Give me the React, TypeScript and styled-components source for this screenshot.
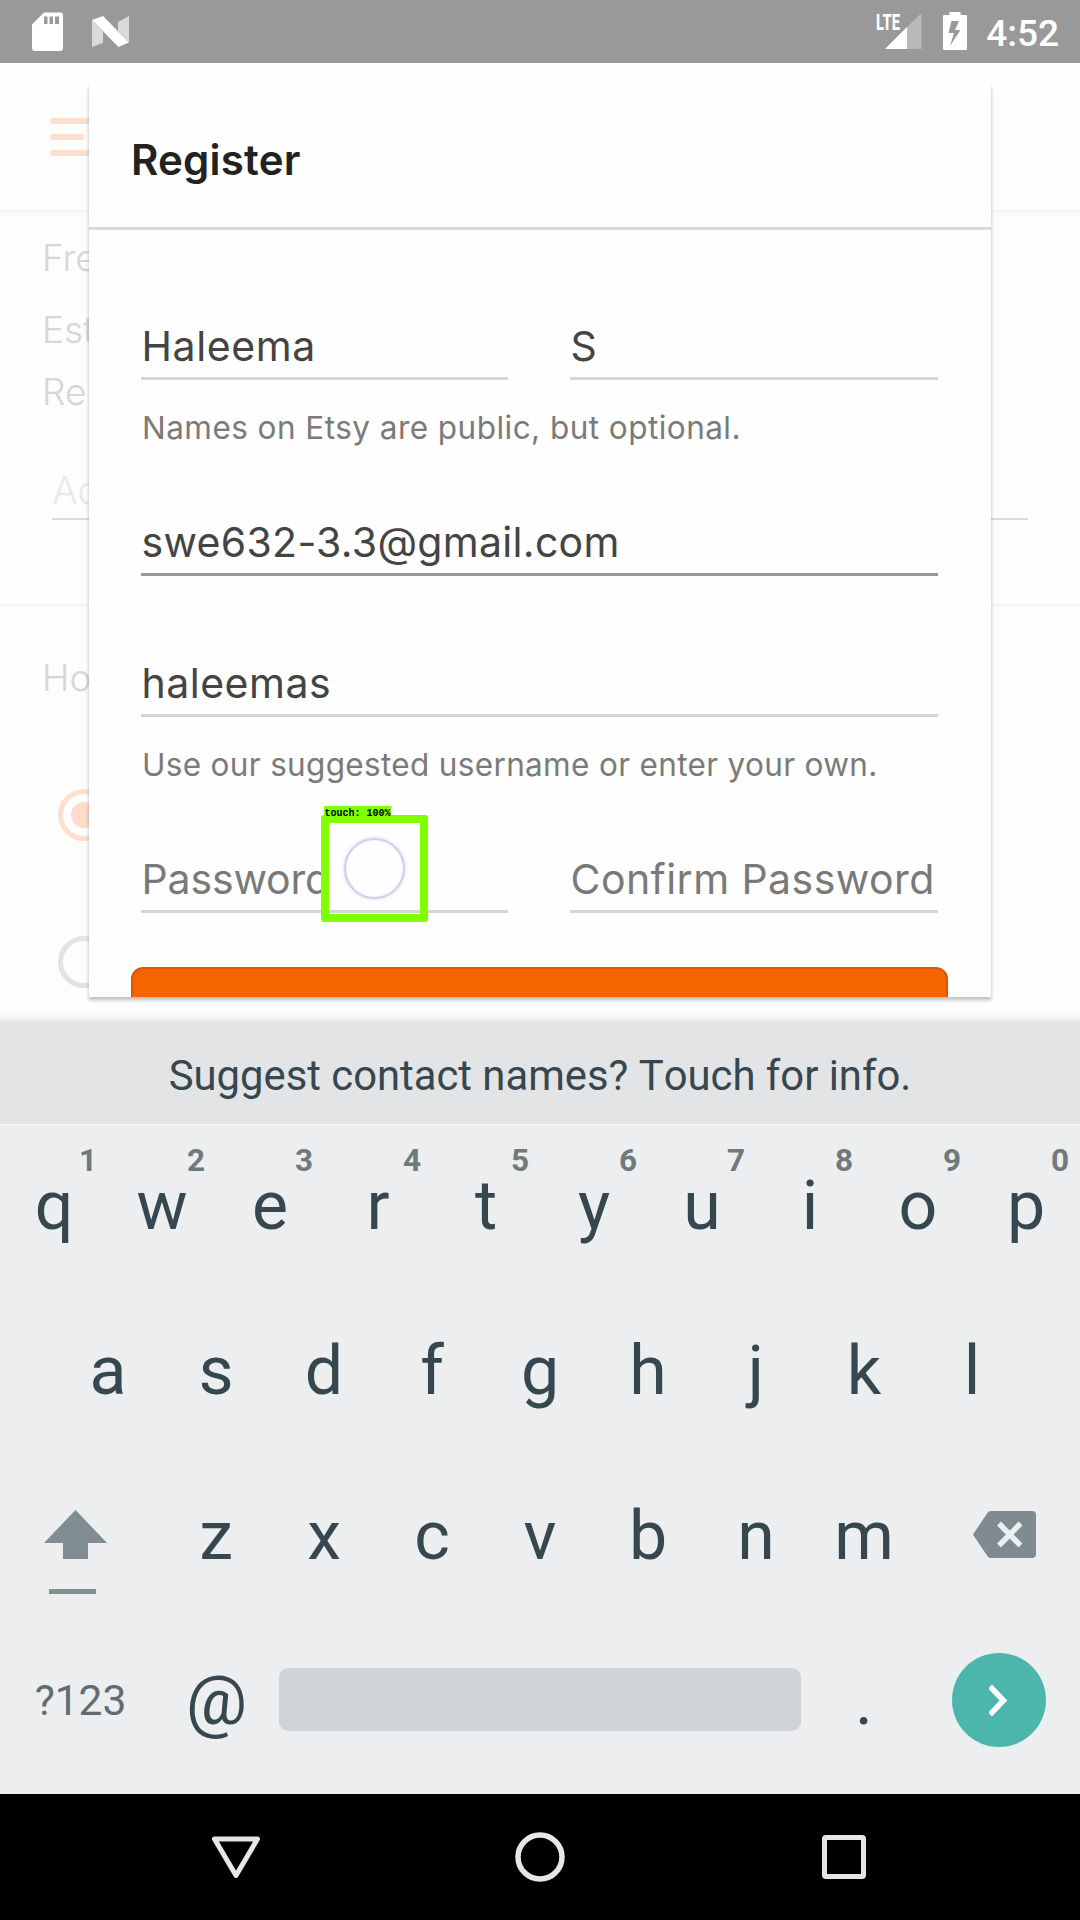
import React from 'react';
import styled, { createGlobalStyle } from 'styled-components';

const GlobalStyle = createGlobalStyle`
  html, body { margin: 0; padding: 0; background: #fdfdfd; }
  *, *::before, *::after { box-sizing: border-box; }
`;

const ui = `Inter, 'Liberation Sans', sans-serif`;
const system = `Roboto, 'Liberation Sans', sans-serif`;

const Screen = styled.div`
  display: flex;
  flex-direction: column;
  width: 1080px;
  height: 1920px;
  overflow: hidden;
  background: #fdfdfd;
  font-family: ${ui};
`;

/* ---------- status bar ---------- */

const StatusBar = styled.header`
  display: flex;
  flex: none;
  justify-content: space-between;
  height: 63px;
  padding: 0 21px 0 32px;
  background: #999;
  color: #fff;
`;

const StatusGroup = styled.div<{ $gap: number }>`
  display: flex;
  align-items: flex-start;
  gap: ${(p) => p.$gap}px;
  padding-top: 12px;
`;

const Signal = styled.svg`
  margin: -6px -1px 0 0;
`;

const Clock = styled.span`
  margin-left: -3px;
  font: 500 37px/43px ${system};
`;

/* ---------- page behind the dialog ---------- */

const Stage = styled.main`
  position: relative;
  flex: none;
  height: 958px;
`;

const AppBar = styled.div`
  display: flex;
  flex-direction: column;
  gap: 10px;
  height: 147px;
  padding: 55px 0 0 50px;
  box-shadow: 0 2px 5px rgba(0, 0, 0, 0.06);
`;

const MenuLine = styled.div<{ $width: number }>`
  width: ${(p) => p.$width}px;
  height: 6px;
  border-radius: 3px;
  background: #fddfce;
`;

const PageBody = styled.div`
  display: flex;
  flex-direction: column;
`;

const PageText = styled.div<{ $top: number }>`
  margin: ${(p) => p.$top}px 0 0 42px;
  color: #d6d6d6;
  font: 350 37px/44px ${ui};
`;

const PageInput = styled.div`
  width: 976px;
  margin: 54px 0 0 52px;
  padding: 0 0 6px 0;
  border-bottom: 2px solid #dedede;
  color: #e9e9e9;
  font: 350 38px/44px ${ui};
`;

const PageDivider = styled.div`
  height: 3px;
  margin-top: 84px;
  background: #f6f6f6;
`;

const Radio = styled.div<{ $top: number; $color: string }>`
  display: flex;
  align-items: center;
  justify-content: center;
  width: 52px;
  height: 52px;
  margin: ${(p) => p.$top}px 0 0 58px;
  border: 5px solid ${(p) => p.$color};
  border-radius: 50%;
`;

const RadioDot = styled.div`
  width: 26px;
  height: 26px;
  border-radius: 50%;
  background: #fddccb;
`;

const KeyboardShade = styled.div`
  position: absolute;
  right: 0;
  bottom: 0;
  left: 0;
  height: 8px;
  background: linear-gradient(rgba(236, 238, 239, 0), #ececed);
`;

/* ---------- dialog ---------- */

const Dialog = styled.section`
  position: absolute;
  top: 21px;
  left: 89px;
  display: flex;
  flex-direction: column;
  width: 902px;
  height: 913px;
  background: #fefefe;
  box-shadow: 0 3px 4px rgba(0, 0, 0, 0.26);
  clip-path: inset(0 -6px -8px -6px);
`;

const DialogHeader = styled.div`
  flex: none;
  height: 146px;
  padding: 51px 0 0 42px;
  border-bottom: 3px solid #dadada;
`;

const DialogTitle = styled.h1`
  margin: 0;
  color: #222;
  font: 570 42px/50px ${ui};
  letter-spacing: 0.2px;
`;

const Form = styled.div`
  flex: 1;
  min-height: 0;
  padding: 91px 53px 0 52px;
  overflow: hidden;
`;

const FieldRow = styled.div<{ $top?: number }>`
  display: grid;
  grid-template-columns: 367px 368px;
  justify-content: space-between;
  margin-top: ${(p) => p.$top ?? 0}px;
`;

const Field = styled.div<{ $top?: number; $active?: boolean; $empty?: boolean; $track?: number }>`
  height: 59px;
  margin-top: ${(p) => p.$top ?? 0}px;
  padding-left: 0.5px;
  border-bottom: 3px solid ${(p) => (p.$active ? '#999' : '#d5d5d5')};
  color: ${(p) => (p.$empty ? '#797979' : '#444')};
  font: 400 41px/50px ${ui};
  letter-spacing: ${(p) => p.$track ?? 0.5}px;
  white-space: nowrap;
`;

const Hint = styled.p<{ $track: number }>`
  margin: 28px 0 0;
  padding-left: 1px;
  color: #7a7a7a;
  font: 400 31.5px/40px ${ui};
  letter-spacing: ${(p) => p.$track}px;
  white-space: nowrap;
`;

const Submit = styled.div`
  height: 110px;
  margin: 54px -10px 0;
  border: 2px solid #d95700;
  border-radius: 12px;
  background: #f56400;
`;

/* ---------- touch marker ---------- */

const TouchMarker = styled.div`
  position: absolute;
  top: 752px;
  left: 321px;
  width: 107px;
  height: 107px;
  border: 8px solid #80ff00;
  border-radius: 3px;
`;

const TouchRing = styled.div`
  width: 61px;
  height: 61px;
  margin: 15px 0 0 15px;
  border: 2.5px solid #cfcfe8;
  border-radius: 50%;
  box-shadow: 0 0 3px 1px rgba(205, 205, 238, 0.5), inset 0 0 2px rgba(205, 205, 238, 0.5);
`;

const TouchLabel = styled.div`
  position: absolute;
  top: -17px;
  left: -5px;
  width: 67px;
  height: 12px;
  padding-left: 0.5px;
  background: #80ff00;
  color: #000;
  font: 700 10px/15px 'Liberation Mono', monospace;
  white-space: nowrap;
`;

/* ---------- keyboard ---------- */

const SuggestionBar = styled.div`
  flex: none;
  height: 103px;
  padding-top: 30px;
  background: #e3e4e5;
  color: #37474f;
  font: 400 41.8px/50px ${system};
  font-kerning: none;
  text-align: center;
`;

const Keyboard = styled.div`
  display: flex;
  flex: none;
  flex-direction: column;
  height: 670px;
  border-top: 2px solid #f3f4f5;
  background: #eceeef;
  color: #37474f;
  font-family: ${system};
`;

const KeyRow = styled.div<{ $inset?: number }>`
  display: flex;
  height: 165px;
  padding: 0 ${(p) => p.$inset ?? 0}px;
`;

const Key = styled.div<{ $width?: number }>`
  position: relative;
  flex: none;
  width: ${(p) => p.$width ?? 108}px;
  padding-top: 40px;
  font-size: 68px;
  line-height: 80px;
  text-align: center;
`;

const KeyHint = styled.span`
  position: absolute;
  top: 16px;
  right: 11px;
  color: #70797c;
  font: 700 31.5px/38px ${system};
`;

const SymbolsKey = styled.div`
  width: 162px;
  padding-top: 55px;
  padding-right: 1px;
  color: #5f6d73;
  font-size: 42.5px;
  line-height: 50px;
  text-align: center;
`;

const SpaceKey = styled.div`
  width: 522px;
  height: 63px;
  margin: 47px 9px 0 8px;
  border-radius: 9px;
  background: #d0d4d7;
`;

const ShiftKey = styled.div`
  display: flex;
  flex-direction: column;
  gap: 30px;
  width: 162px;
  padding: 54px 0 0 44px;
`;

const ShiftBar = styled.div`
  width: 47px;
  height: 5px;
  margin-left: 5px;
  background: #82908f;
`;

const DeleteKey = styled.div`
  width: 162px;
  padding: 55px 0 0 55px;
`;

const EnterKey = styled.div`
  display: flex;
  align-items: center;
  justify-content: center;
  width: 94px;
  height: 94px;
  margin: 32px 0 0 34px;
  border-radius: 50%;
  background: #4db6ac;
`;

/* ---------- navigation bar ---------- */

const NavBar = styled.nav`
  display: flex;
  flex: none;
  align-items: center;
  justify-content: center;
  gap: 254px;
  height: 126px;
  background: #000;
`;

const topKeys = 'qwertyuiop'.split('');
const middleKeys = 'asdfghjkl'.split('');
const bottomKeys = 'zxcvbnm'.split('');

export default function App() {
  return (
    <Screen>
      <GlobalStyle />
      <StatusBar>
        <StatusGroup $gap={29}>
          <svg width="31" height="40" viewBox="0 0 31 40">
            <path
              fill="#fff"
              fillRule="evenodd"
              d="M12 .5H28a3 3 0 0 1 3 3V36a3 3 0 0 1-3 3H3a3 3 0 0 1-3-3V12.500ZM12 4.500v7.500h3.500V4.500ZM17.500 4.500v7.500H21V4.500ZM23 4.500v7.500h4V4.500Z"
            />
          </svg>
          <svg width="38" height="40" viewBox="0 0 38 40">
            <path fill="#dadada" d="M0 8 11 20V31L0 35ZM26 10 37 4V30L26 19Z" />
            <path fill="#fff" d="M0 8 11 4 37 30.500 26.500 35Z" />
          </svg>
        </StatusGroup>
        <StatusGroup $gap={22}>
          <Signal width="50" height="46" viewBox="-4 -6 50 46">
            <path fill="#b8b8b8" d="M31 15 45.500 1V37H31Z" />
            <path fill="#fff" d="M9 37 31 15V37Z" />
            <text
              x="0"
              y="17.500"
              fill="#fff"
              fontFamily="Roboto, sans-serif"
              fontWeight="800"
              fontSize="22"
              textLength="24"
              lengthAdjust="spacingAndGlyphs"
            >
              LTE
            </text>
          </Signal>
          <svg width="24" height="40" viewBox="0 0 24 40">
            <path
              fill="#fff"
              fillRule="evenodd"
              d="M6.500 0h11v3H23a1 1 0 0 1 1 1V37a1 1 0 0 1-1 1H1a1 1 0 0 1-1-1V4A1 1 0 0 1 1 3H6.500ZM8.500 9 5.500 21h5.500L7 34 17.500 18h-5.500L16 9Z"
            />
          </svg>
          <Clock>4:52</Clock>
        </StatusGroup>
      </StatusBar>

      <Stage>
        <AppBar>
          <MenuLine $width={48} />
          <MenuLine $width={34} />
          <MenuLine $width={48} />
        </AppBar>
        <PageBody>
          <PageText $top={26}>Fre</PageText>
          <PageText $top={28}>Est</PageText>
          <PageText $top={18}>Re</PageText>
          <PageInput>Ad</PageInput>
          <PageDivider />
          <PageText $top={49}>Ho</PageText>
          <Radio $top={89} $color="#fddfce">
            <RadioDot />
          </Radio>
          <Radio $top={95} $color="#e3e3e3" />
        </PageBody>
        <KeyboardShade />

        <Dialog>
          <DialogHeader>
            <DialogTitle>Register</DialogTitle>
          </DialogHeader>
          <Form>
            <FieldRow>
              <Field $track={0.6}>Haleema</Field>
              <Field>S</Field>
            </FieldRow>
            <Hint $track={0.46}>Names on Etsy are public, but optional.</Hint>
            <Field $top={69} $track={0.3} $active>
              swe632-3.3@gmail.com
            </Field>
            <Field $top={82}>haleemas</Field>
            <Hint $track={0.33}>Use our suggested username or enter your own.</Hint>
            <FieldRow $top={69}>
              <Field $track={-0.15} $empty>
                Password
              </Field>
              <Field $track={0.45} $empty>
                Confirm Password
              </Field>
            </FieldRow>
            <Submit />
          </Form>
        </Dialog>

        <TouchMarker>
          <TouchRing />
          <TouchLabel>touch: 100%</TouchLabel>
        </TouchMarker>
      </Stage>

      <SuggestionBar>Suggest contact names? Touch for info.</SuggestionBar>
      <Keyboard>
        <KeyRow>
          {topKeys.map((k, i) => (
            <Key key={k}>
              {k}
              <KeyHint>{(i + 1) % 10}</KeyHint>
            </Key>
          ))}
        </KeyRow>
        <KeyRow $inset={54}>
          {middleKeys.map((k) => (
            <Key key={k}>{k}</Key>
          ))}
        </KeyRow>
        <KeyRow>
          <ShiftKey>
            <svg width="63" height="49" viewBox="0 0 63 49">
              <path fill="#7f8c91" d="M31.500 0 63 33H44V49H19V33H0Z" />
            </svg>
            <ShiftBar />
          </ShiftKey>
          {bottomKeys.map((k) => (
            <Key key={k}>{k}</Key>
          ))}
          <DeleteKey>
            <svg width="63" height="47" viewBox="0 0 63 47">
              <path
                fill="#7f8b91"
                d="M17.500 0H59a4 4 0 0 1 4 4V43a4 4 0 0 1-4 4H17.500Q15.500 47 14 44.500L0 23.500 14 2.500Q15.500 0 17.500 0Z"
              />
              <path stroke="#eceeef" strokeWidth="5.500" d="M26 12.500 47.500 34.500M47.500 12.500 26 34.500" />
            </svg>
          </DeleteKey>
        </KeyRow>
        <KeyRow>
          <SymbolsKey>?123</SymbolsKey>
          <Key $width={109}>@</Key>
          <SpaceKey />
          <Key>.</Key>
          <EnterKey>
            <svg width="20" height="33" viewBox="0 0 20 33">
              <path fill="none" stroke="#fff" strokeWidth="5.500" d="M1 2.500 14.500 16.500 1 30.500" />
            </svg>
          </EnterKey>
        </KeyRow>
      </Keyboard>

      <NavBar>
        <svg width="50" height="50" viewBox="0 0 50 50">
          <path
            fill="none"
            stroke="#e6e6e6"
            strokeWidth="5"
            strokeLinejoin="round"
            d="M3.500 7H46.500L25 43.500Z"
          />
        </svg>
        <svg width="50" height="50" viewBox="0 0 50 50">
          <circle cx="25" cy="25" r="22" fill="none" stroke="#e6e6e6" strokeWidth="5.500" />
        </svg>
        <svg width="50" height="50" viewBox="0 0 50 50">
          <rect x="5.500" y="5.500" width="39" height="39" rx="1.500" fill="none" stroke="#e6e6e6" strokeWidth="5" />
        </svg>
      </NavBar>
    </Screen>
  );
}
